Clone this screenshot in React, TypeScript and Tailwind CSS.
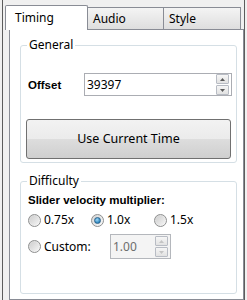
import React, { useState } from "react";

// Botones pequeños de subir/bajar para los campos numéricos
function Spinner({ disabled = false }: { disabled?: boolean }) {
  const fill = disabled ? "#c4c4c4" : "#5a5a5a";
  return (
    <div className="flex flex-col gap-[1px]">
      <span className="flex h-[10px] w-[13px] items-center justify-center rounded-[1px] border border-[#b8bcc4] bg-gradient-to-b from-[#f6f6f6] to-[#e2e2e2]">
        <svg width="5" height="3" viewBox="0 0 5 3">
          <path d="M0 3 L2.5 0 L5 3 Z" fill={fill} />
        </svg>
      </span>
      <span className="flex h-[10px] w-[13px] items-center justify-center rounded-[1px] border border-[#b8bcc4] bg-gradient-to-b from-[#f6f6f6] to-[#e2e2e2]">
        <svg width="5" height="3" viewBox="0 0 5 3">
          <path d="M0 0 L5 0 L2.5 3 Z" fill={fill} />
        </svg>
      </span>
    </div>
  );
}

// Botón de radio con el estilo clásico de Windows
function Radio({ checked }: { checked: boolean }) {
  return (
    <span className="flex h-[13px] w-[13px] shrink-0 items-center justify-center rounded-full border border-[#8e8f8f] bg-gradient-to-br from-[#d4d4d4] to-[#fbfbfb]">
      {checked ? (
        <span className="h-[7px] w-[7px] rounded-full border border-[#2c628b] bg-[radial-gradient(circle_at_40%_35%,#9fd8f8,#2d86bd_70%)]" />
      ) : (
        <span className="h-[9px] w-[9px] rounded-full bg-gradient-to-br from-[#cfcfcf] to-[#f4f4f4]" />
      )}
    </span>
  );
}

export default function App() {
  const [tab, setTab] = useState("Timing");
  const [speed, setSpeed] = useState("1.0x");
  const [offset, setOffset] = useState("39397");

  const tabs = [
    { name: "Timing", w: "w-[83px]" },
    { name: "Audio", w: "w-[76px]" },
    { name: "Style", w: "w-[77px]" },
  ];

  return (
    <div className="h-[300px] w-[247px] bg-[#f0f0f0] px-[2px] font-['Noto_Sans','Liberation_Sans',sans-serif] text-[12px] leading-[16px] text-black">
      <div className="flex h-full flex-col border-x border-[#5c5c5c] px-[3px]">
        {/* Pestañas */}
        <div className="flex h-[29px] shrink-0 items-end">
          {tabs.map((t, i) => {
            const active = tab === t.name;
            return (
              <button
                key={t.name}
                type="button"
                onClick={() => setTab(t.name)}
                className={
                  active
                    ? `relative z-10 -mb-px -ml-px h-[25px] ${t.w} rounded-t-[2px] border border-b-0 border-[#898c95] bg-white pl-[9px] text-left`
                    : `h-[22px] ${t.w} ${i === 0 ? "border-l" : ""} border-y-0 border-r border-t border-[#898c95] bg-gradient-to-b from-[#f4f4f4] to-[#dedede] pl-[5px] text-left`
                }
              >
                {t.name}
              </button>
            );
          })}
        </div>

        {/* Panel de contenido */}
        <div className="ml-[3px] flex w-[235px] flex-1 flex-col border border-[#898c95] bg-white pb-[4px] pl-[10px] pr-[6px] pt-[7px]">
          <fieldset className="rounded-[3px] border border-[#d5dfe5] pb-[3px] pl-[5px] pr-[4px]">
            <legend className="ml-[1px] px-[2px]">General</legend>
            <div className="mt-[20px] flex items-center">
              <span className="w-[58px] pl-[2px] font-['Liberation_Sans',sans-serif] text-[11.5px] font-bold">
                Offset
              </span>
              <div className="flex h-[23px] w-[148px] items-center justify-between border border-[#abadb3] pl-[2px] pr-[2px]">
                <input
                  value={offset}
                  onChange={(e) => setOffset(e.target.value)}
                  className="w-[100px] bg-transparent outline-none"
                />
                <Spinner />
              </div>
            </div>
            <button
              type="button"
              className="mt-[23px] h-[40px] w-[205px] rounded-[3px] border border-[#707070] bg-[linear-gradient(#f2f2f2_0%,#ebebeb_50%,#dddddd_51%,#cfcfcf_100%)] text-[12.5px]"
            >
              Use Current Time
            </button>
          </fieldset>

          <fieldset className="mt-[10px] rounded-[3px] border border-[#d5dfe5] pb-[34px] pl-[5px] pr-[4px]">
            <legend className="ml-[1px] px-[2px]">Difficulty</legend>
            <div className="mt-[3px] pl-[2px] font-['Liberation_Sans',sans-serif] text-[11.5px] font-bold">
              Slider velocity multiplier:
            </div>
            <div className="mt-[4px] flex pl-[2px]">
              {["0.75x", "1.0x", "1.5x"].map((s) => (
                <label
                  key={s}
                  className="flex w-[63px] cursor-default items-center gap-[3px]"
                  onClick={() => setSpeed(s)}
                >
                  <Radio checked={speed === s} />
                  <span>{s}</span>
                </label>
              ))}
            </div>
            <div className="mt-[6px] flex items-center pl-[2px]">
              <label
                className="flex w-[82px] cursor-default items-center gap-[3px]"
                onClick={() => setSpeed("custom")}
              >
                <Radio checked={speed === "custom"} />
                <span>Custom:</span>
              </label>
              <div className="flex h-[25px] w-[61px] items-center justify-between border border-[#b4b7bc] bg-[#f4f4f4] pl-[2px] pr-[2px] text-[#6d6d6d]">
                <span>1.00</span>
                <Spinner disabled />
              </div>
            </div>
          </fieldset>
        </div>
      </div>
    </div>
  );
}
